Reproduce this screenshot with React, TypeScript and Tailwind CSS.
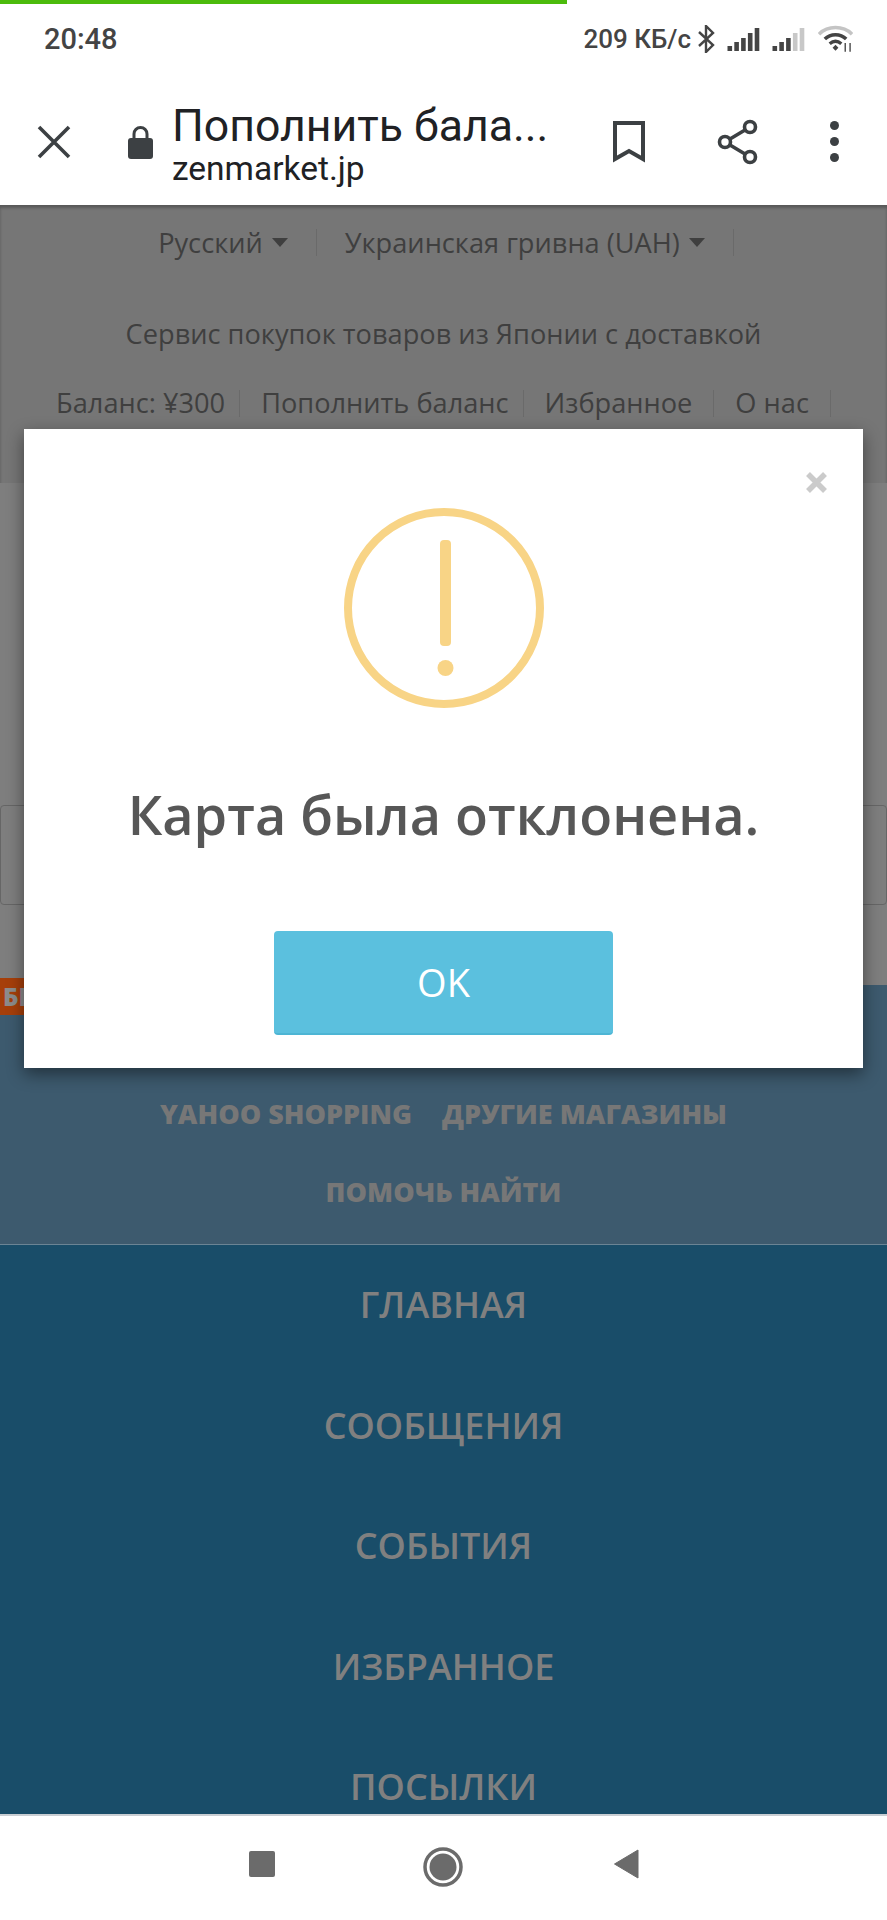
import React from "react";

const OS = { fontFamily: '"Open Sans", "Noto Sans", sans-serif' };
const RB = { fontFamily: 'Roboto, "Noto Sans", sans-serif' };

function Sep() {
  return <span className="block w-px h-[27px] bg-[#6a6a6a]" />;
}

function Caret() {
  return <span className="block w-0 h-0 border-solid border-l-[8px] border-r-[8px] border-t-[9px] border-l-transparent border-r-transparent border-t-[#3f3f3f]" />;
}

function Bars({ dim }: { dim?: boolean }) {
  const hs = [5, 9, 13, 18, 23];
  return (
    <svg className="block" width="34" height="24" viewBox="0 0 34 24">
      {hs.map((h, i) => (
        <rect key={i} x={0.5 + i * 6.8} y={24 - h} width="4.6" height={h} fill={dim && i > 2 ? "#c8c8c8" : "#444"} />
      ))}
    </svg>
  );
}

export default function App() {
  return (
    <div className="relative w-[887px] h-[1920px] overflow-hidden bg-white flex flex-col" style={OS}>
      <div className="h-[70px] shrink-0 relative bg-white">
        <div className="h-[4px] w-[567px] bg-[#4cbb0c]" />
        <div className="flex items-center justify-between pl-[44px] pr-[34px] pt-[17px]" style={RB}>
          <span className="text-[29px] font-medium text-[#444] leading-[36px]">20:48</span>
          <div className="flex items-center">
            <span className="text-[26px] font-medium text-[#444] leading-[36px]">209 КБ/с</span>
            <svg className="ml-[6px]" width="18" height="28" viewBox="0 0 18 28" fill="none" stroke="#444" strokeWidth="2.4">
              <path d="M2 7l14 13-7 7V1l7 7L2 21" />
            </svg>
            <span className="ml-[12px]"><Bars /></span>
            <span className="ml-[11px]"><Bars dim /></span>
            <svg className="ml-[12px]" width="35" height="28" viewBox="0 0 36 28" fill="none">
              <path d="M1 9C10 0 26 0 35 9" stroke="#c4c4c4" strokeWidth="3.6" />
              <path d="M7 14c6-6 16-6 22 0" stroke="#444" strokeWidth="3.6" />
              <path d="M12 19c4-3.5 8-3.5 12 0" stroke="#444" strokeWidth="3.4" />
              <path d="M15 23l3-3 3 3-3 3z" fill="#444" />
              <path d="M28 18v9M33 18v9" stroke="#444" strokeWidth="1.4" />
            </svg>
          </div>
        </div>
      </div>

      <div className="h-[135px] shrink-0 flex items-center bg-white relative pt-[8px]">
        <svg className="ml-[37px]" width="34" height="34" viewBox="0 0 34 34" fill="none" stroke="#3c4043" strokeWidth="3.6">
          <path d="M2 2l30 30M32 2L2 32" />
        </svg>
        <svg className="ml-[57px]" width="25" height="34" viewBox="0 0 25 34">
          <path d="M6 14V9a6.5 6.5 0 0113 0v5" fill="none" stroke="#3c4043" strokeWidth="3" />
          <rect x="0" y="13" width="25" height="21" rx="3" fill="#3c4043" />
        </svg>
        <div className="ml-[19px] mt-[8px] w-[400px] flex flex-col" style={RB}>
          <span className="block text-[44.6px] leading-[46px] text-[#202124] whitespace-nowrap">Пополнить бала...</span>
          <span className="block text-[33.5px] leading-[40px] text-[#202124]">zenmarket.jp</span>
        </div>
        <svg className="ml-[41px]" width="32" height="42" viewBox="0 0 32 42" fill="none" stroke="#3c4043" strokeWidth="4">
          <path d="M2 2h28v36L16 30 2 38z" />
        </svg>
        <svg className="ml-[72px]" width="42" height="46" viewBox="0 0 42 46" fill="none" stroke="#3c4043" strokeWidth="3.6">
          <circle cx="33" cy="8" r="5.5" />
          <circle cx="8" cy="23" r="5.5" />
          <circle cx="33" cy="38" r="5.5" />
          <path d="M13 20l15-9M13 26l15 9" />
        </svg>
        <div className="ml-[71px] flex flex-col gap-[7px]">
          <span className="w-[9px] h-[9px] rounded-full bg-[#3c4043]" />
          <span className="w-[9px] h-[9px] rounded-full bg-[#3c4043]" />
          <span className="w-[9px] h-[9px] rounded-full bg-[#3c4043]" />
        </div>
      </div>

      <div className="flex-1 min-h-0 flex flex-col bg-[#767676] shadow-[inset_0_3px_3px_rgba(0,0,0,0.25)]">
        <div className="h-[278px] shrink-0 flex flex-col items-center text-[#3f3f3f] text-[27.2px]">
          <div className="flex items-center h-[27px] mt-[24px] ml-[5px]">
            <span className="leading-none">Русский</span>
            <span className="ml-[9px]"><Caret /></span>
            <span className="ml-[28px]"><Sep /></span>
            <span className="ml-[28px] leading-none">Украинская гривна (UAH)</span>
            <span className="ml-[9px]"><Caret /></span>
            <span className="ml-[28px]"><Sep /></span>
          </div>
          <div className="mt-[60px] leading-[36px]">Сервис покупок товаров из Японии с доставкой</div>
          <div className="flex items-center mt-[38px] h-[27px]">
            <span>Баланс: ¥300</span>
            <span className="ml-[14px]"><Sep /></span>
            <span className="ml-[21px]">Пополнить баланс</span>
            <span className="ml-[14px]"><Sep /></span>
            <span className="ml-[21px]">Избранное</span>
            <span className="ml-[21px]"><Sep /></span>
            <span className="ml-[21px]">О нас</span>
            <span className="ml-[21px]"><Sep /></span>
          </div>
        </div>
        <div className="h-[502px] shrink-0 bg-[#7e7e7e] flex flex-col">
          <div className="shrink-0 mt-[322px] h-[100px] border border-[#666] rounded-[4px]" />
          <div className="shrink-0 relative z-10 mt-[73px] w-[40px] h-[37px] bg-[#a63f0a] flex items-center overflow-hidden">
            <span className="pl-[3px] text-[24px] font-extrabold text-[#8c8c8c] leading-none">БЕ</span>
          </div>
        </div>
        <div className="h-[260px] shrink-0 bg-[#3d5a6e] border-b border-[#6b8494] flex flex-col items-center justify-end pb-[34px] text-[#777] text-[27px] font-extrabold uppercase">
          <div className="flex gap-[30px] leading-[36px]">
            <span>Yahoo shopping</span>
            <span>Другие магазины</span>
          </div>
          <div className="mt-[42px] leading-[36px]">Помочь найти</div>
        </div>
        <div className="flex-1 min-h-0 bg-[#194d69] flex flex-col items-center pt-[30px] text-[#808080] text-[36px] font-semibold uppercase overflow-hidden">
          <div className="shrink-0 h-[121px] leading-[60px]">Главная</div>
          <div className="shrink-0 h-[120px] leading-[60px]">Сообщения</div>
          <div className="shrink-0 h-[121px] leading-[60px]">События</div>
          <div className="shrink-0 h-[120px] leading-[60px]">Избранное</div>
          <div className="shrink-0 h-[60px] leading-[60px]">Посылки</div>
        </div>
      </div>

      <div className="h-[106px] shrink-0 bg-white border-t-[2px] border-[#c9ced3] relative flex items-center pb-[8px]">
        <span className="ml-[249px] w-[26px] h-[26px] bg-[#6b6b6b] rounded-[2px]" />
        <svg className="ml-[148px] mt-[6px]" width="40" height="40" viewBox="0 0 40 40">
          <circle cx="20" cy="20" r="18" fill="none" stroke="#6b6b6b" strokeWidth="3.5" />
          <circle cx="20" cy="20" r="13.5" fill="#6b6b6b" />
        </svg>
        <svg className="ml-[150px]" width="26" height="30" viewBox="0 0 26 30">
          <path d="M1.5 15L25 1v28z" fill="#6b6b6b" stroke="#6b6b6b" strokeLinejoin="round" />
        </svg>
      </div>

      <div className="absolute z-20 left-[24px] top-[429px] w-[839px] h-[639px] bg-white shadow-[0_6px_16px_rgba(0,0,0,0.45)] flex flex-col items-center">
        <svg className="absolute right-[36px] top-[43px]" width="21" height="21" viewBox="0 0 21 21" fill="none" stroke="#cbcbcb" strokeWidth="5.5">
          <path d="M2 2l17 17M19 2L2 19" />
        </svg>
        <svg className="mt-[79px]" width="200" height="200" viewBox="0 0 200 200" fill="none">
          <circle cx="100" cy="100" r="96" stroke="#f8d486" strokeWidth="8" />
          <rect x="96" y="32" width="11" height="106" rx="4" fill="#f8d486" />
          <circle cx="101.5" cy="160" r="8" fill="#f8d486" />
        </svg>
        <div className="mt-[70px] text-[54px] leading-[72px] font-semibold text-[#575757]">Карта была отклонена.</div>
        <div className="mt-[81px] w-[339px] h-[104px] rounded-[4px] bg-[#5bc0de] border-b-[2px] border-[#4db5d4] flex items-center justify-center text-white text-[38px]">
          OK
        </div>
      </div>
    </div>
  );
}
